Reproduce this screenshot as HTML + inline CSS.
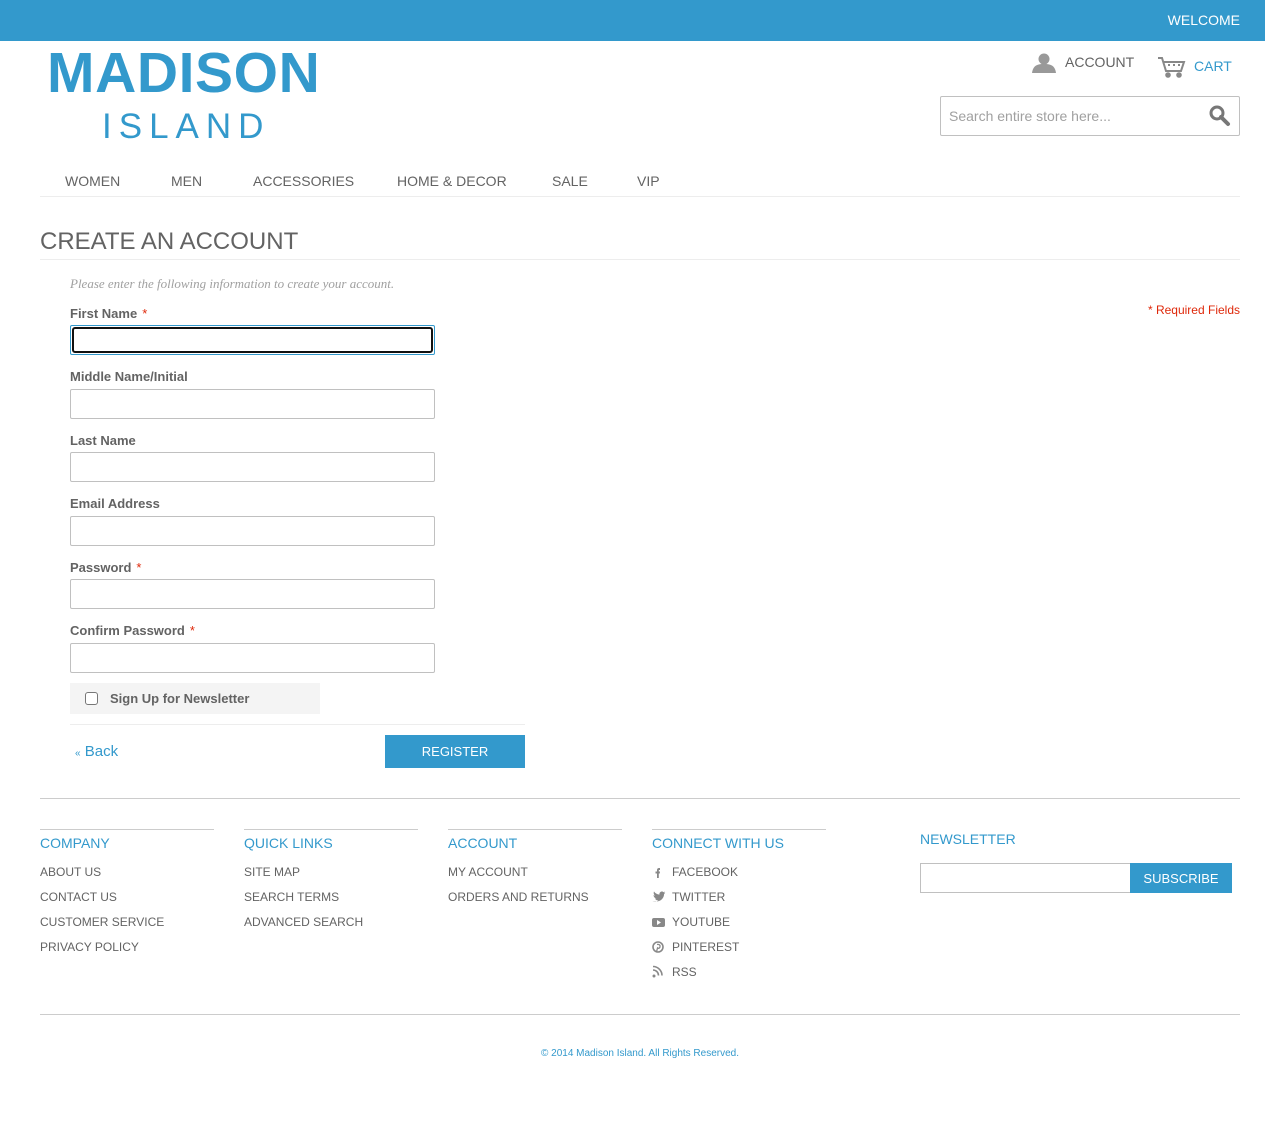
<!DOCTYPE html>
<html><head><meta charset="utf-8">
<style>
*{margin:0;padding:0;box-sizing:border-box}
body{width:1265px;height:1122px;background:#fff;font-family:"Liberation Sans",sans-serif;color:#636363;position:relative;overflow:hidden}
.a{position:absolute;white-space:nowrap}
.top{position:absolute;left:0;top:0;width:1265px;height:41px;background:#3399cc}
.nav{font-size:14px;color:#636363;top:173px}
.lbl{font-size:13px;font-weight:bold;color:#636363;left:70px}
.lbl b{color:#df280a;font-weight:normal;margin-left:5px}
.inp{position:absolute;left:70px;width:365px;height:30px;border:1px solid #c0c0c0;border-radius:2px}
.fh{font-size:14px;color:#3399cc}
.fl{font-size:12px;color:#636363}
.hr{position:absolute;height:1px;background:#ccc}
</style></head><body>
<div class="top"></div>
<div class="a" style="right:25px;top:12px;color:#fff;font-size:14px">WELCOME</div>
<div class="a" style="left:47px;top:40px;font-size:57px;font-weight:bold;color:#3399cc;letter-spacing:0.6px">MADISON</div>
<div class="a" style="left:102px;top:107px;font-size:35px;color:#3399cc;letter-spacing:7px">ISLAND</div>
<svg class="a" style="left:1032px;top:53px" width="24" height="20" viewBox="0 0 24 20"><circle cx="12" cy="6" r="5.5" fill="#999"/><path d="M0 20 C1 12 6 11 12 11 C18 11 23 12 24 20Z" fill="#999"/></svg>
<div class="a" style="left:1065px;top:54px;font-size:14px">ACCOUNT</div>
<svg class="a" style="left:1157px;top:56px" width="30" height="22" viewBox="0 0 30 22" fill="none" stroke="#888" stroke-width="2"><path d="M1 2h4l4 13h15l3-9H7"/><path d="M11 9h2M16 9h2M21 9h2" stroke-width="2"/><circle cx="11" cy="19" r="1.8" fill="#888"/><circle cx="22" cy="19" r="1.8" fill="#888"/></svg>
<div class="a" style="left:1194px;top:58px;font-size:14px;color:#3399cc">CART</div>
<div class="a" style="left:940px;top:96px;width:300px;height:40px;border:1px solid #c0c0c0;border-radius:2px"></div>
<div class="a" style="left:949px;top:108px;font-size:14px;color:#a0a0a0">Search entire store here...</div>
<svg class="a" style="left:1209px;top:105px" width="22" height="22" viewBox="0 0 22 22"><circle cx="8" cy="8" r="6" fill="none" stroke="#777" stroke-width="3"/><path d="M12 12l7 7" stroke="#777" stroke-width="4" stroke-linecap="round"/></svg>
<div class="a nav" style="left:65px">WOMEN</div>
<div class="a nav" style="left:171px">MEN</div>
<div class="a nav" style="left:253px">ACCESSORIES</div>
<div class="a nav" style="left:397px">HOME &amp; DECOR</div>
<div class="a nav" style="left:552px">SALE</div>
<div class="a nav" style="left:637px">VIP</div>
<div class="hr" style="left:40px;top:196px;width:1200px;background:#ededed"></div>
<div class="a" style="left:40px;top:228px;font-size:24px;color:#636363">CREATE AN ACCOUNT</div>
<div class="hr" style="left:40px;top:259px;width:1200px;background:#ededed"></div>
<div class="a" style="left:70px;top:276px;font-size:13px;font-style:italic;font-family:'Liberation Serif',serif;color:#a0a0a0">Please enter the following information to create your account.</div>
<div class="a" style="right:25px;top:303px;font-size:12px;color:#df280a">* Required Fields</div>
<div class="a lbl" style="top:306px">First Name<b>*</b></div>
<div class="inp" style="top:325px;border:1px solid #3399cc;padding:1px"><div style="width:100%;height:100%;border:2px solid #111;border-radius:3px"></div></div>
<div class="a lbl" style="top:369px">Middle Name/Initial</div>
<div class="inp" style="top:389px"></div>
<div class="a lbl" style="top:433px">Last Name</div>
<div class="inp" style="top:452px"></div>
<div class="a lbl" style="top:496px">Email Address</div>
<div class="inp" style="top:516px"></div>
<div class="a lbl" style="top:560px">Password<b>*</b></div>
<div class="inp" style="top:579px"></div>
<div class="a lbl" style="top:623px">Confirm Password<b>*</b></div>
<div class="inp" style="top:643px"></div>
<div class="a" style="left:70px;top:683px;width:250px;height:31px;background:#f4f4f4"></div>
<div class="a" style="left:85px;top:692px;width:13px;height:13px;border:1px solid #777;border-radius:3px;background:#fff"></div>
<div class="a" style="left:110px;top:691px;font-size:13px;font-weight:bold;color:#636363">Sign Up for Newsletter</div>
<div class="hr" style="left:70px;top:724px;width:455px;background:#ededed"></div>
<div class="a" style="left:75px;top:743px;font-size:15px;color:#3399cc"><span style="font-size:10px">«</span> Back</div>
<div class="a" style="left:385px;top:735px;width:140px;height:33px;background:#3399cc;color:#fff;font-size:13px;text-align:center;line-height:33px">REGISTER</div>
<div class="hr" style="left:40px;top:798px;width:1200px"></div>
<div class="hr" style="left:40px;top:829px;width:174px"></div>
<div class="hr" style="left:244px;top:829px;width:174px"></div>
<div class="hr" style="left:448px;top:829px;width:174px"></div>
<div class="hr" style="left:652px;top:829px;width:174px"></div>
<div class="a fh" style="left:40px;top:835px">COMPANY</div>
<div class="a fh" style="left:244px;top:835px">QUICK LINKS</div>
<div class="a fh" style="left:448px;top:835px">ACCOUNT</div>
<div class="a fh" style="left:652px;top:835px">CONNECT WITH US</div>
<div class="a fh" style="left:920px;top:831px">NEWSLETTER</div>
<div class="a fl" style="left:40px;top:860px;line-height:25px">ABOUT US<br>CONTACT US<br>CUSTOMER SERVICE<br>PRIVACY POLICY</div>
<div class="a fl" style="left:244px;top:860px;line-height:25px">SITE MAP<br>SEARCH TERMS<br>ADVANCED SEARCH</div>
<div class="a fl" style="left:448px;top:860px;line-height:25px">MY ACCOUNT<br>ORDERS AND RETURNS</div>
<div class="a fl" style="left:672px;top:860px;line-height:25px">FACEBOOK<br>TWITTER<br>YOUTUBE<br>PINTEREST<br>RSS</div>
<svg class="a" style="left:652px;top:866px" width="14" height="115" viewBox="0 0 14 115" fill="#888">
<path d="M5 12V7.5H3.5V5.5H5V4C5 2.5 6 2 7 2H8V4H7.2C6.8 4 6.8 4.3 6.8 4.5V5.5H8L7.8 7.5H6.8V12Z"/>
<path d="M0.5 35C2.5 36 4.5 36 6.5 34.5C4.5 34.5 3.5 33.5 3 32.5H4.5C2.5 32 1.5 30.5 1.5 29C2 29.5 2.5 29.5 3 29.5C1.5 28.5 1.5 26.5 2 25.5C3.5 27.5 5.5 28.5 7.5 28.5C7 26 10 24.5 11.5 26.2L13 25.5L12.2 27L13.3 26.7L12.1 28C12 33 7.5 37 0.5 35Z"/>
<rect x="0" y="52" width="13" height="9" rx="2"/><path d="M5 54v5l4-2.5z" fill="#fff"/>
<circle cx="6" cy="81" r="5" fill="none" stroke="#888" stroke-width="1.6"/><path d="M5 78.5c2.5-.5 3.5 1 3 2.5s-2 1.5-2.5 1L4.5 86" stroke="#888" stroke-width="1.3" fill="none"/>
<circle cx="2" cy="110" r="1.5"/><path d="M1 104a5.5 5.5 0 0 1 5.5 5.5" stroke="#888" stroke-width="1.6" fill="none"/><path d="M1 100.5a9 9 0 0 1 9 9" stroke="#888" stroke-width="1.6" fill="none"/>
</svg>
<div class="a" style="left:920px;top:863px;width:211px;height:30px;border:1px solid #c0c0c0"></div>
<div class="a" style="left:1130px;top:863px;width:102px;height:30px;background:#3399cc;color:#fff;font-size:13px;text-align:center;line-height:31px">SUBSCRIBE</div>
<div class="hr" style="left:40px;top:1014px;width:1200px"></div>
<div class="a" style="left:0;width:1280px;text-align:center;top:1048px;font-size:10px;color:#3399cc">© 2014 Madison Island. All Rights Reserved.</div>
</body></html>
